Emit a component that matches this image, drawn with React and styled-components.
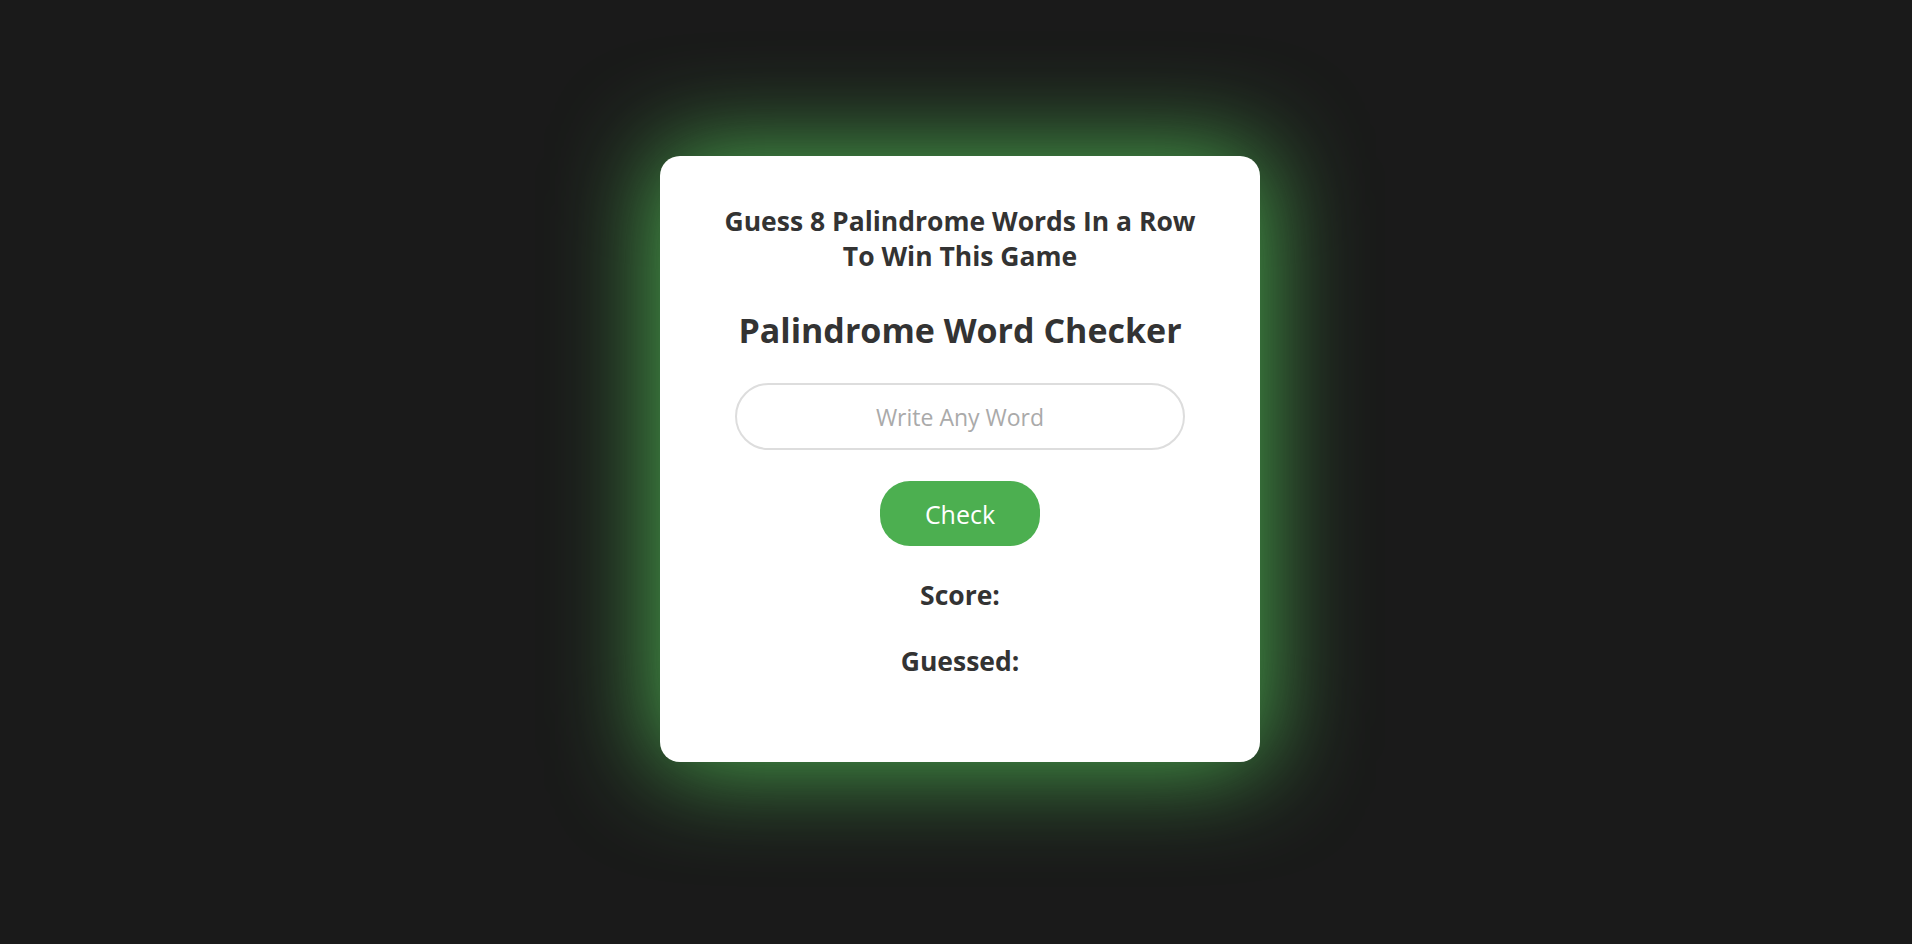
import React, {useState} from "react";
import styled, {createGlobalStyle} from "styled-components";

const GlobalStyle = createGlobalStyle`
    html, body {
        margin: 0;
        padding: 0;
        background: #1a1a1a;
    }
    body {
        font-family: "Open Sans", "Noto Sans", sans-serif;
        color: #333333;
    }
`

const Page = styled.main`
    min-height: 100vh;
    box-sizing: border-box;
    display: flex;
    justify-content: center;
    align-items: flex-start;
    padding: 156px 0 0 8px;
`

const Card = styled.section`
    width: 600px;
    box-sizing: border-box;
    padding: 48px 40px 83px;
    display: flex;
    flex-direction: column;
    align-items: center;
    background: #FFFFFF;
    border-radius: 20px;
    box-shadow: 0 0 100px 5px #4caf50;
    text-align: center;
`

const Title = styled.h3`
    margin: 0 0 36px;
    font-size: 26.5px;
    line-height: 35px;
    font-weight: 700;
    width: 490px;
`

const Heading = styled.h1`
    margin: 0 0 33px;
    font-size: 34px;
    line-height: 40px;
    font-weight: 700;
`

const WordInput = styled.input`
    width: 450px;
    height: 67px;
    box-sizing: border-box;
    padding: 0 20px;
    border: 2px solid #dddddd;
    border-radius: 34px;
    font-family: inherit;
    font-size: 23px;
    color: #333333;
    text-align: center;
    outline: none;
    margin: 0 0 31px;

    &::placeholder {
        color: #aaaaaa;
    }
`

const CheckButton = styled.button`
    width: 160px;
    height: 65px;
    border: none;
    border-radius: 30px;
    background: #4caf50;
    color: #FFFFFF;
    font-family: inherit;
    font-size: 25px;
    cursor: pointer;
    margin: 0 0 32px;
`

const Stat = styled.p`
    margin: ${props => props.last ? "0" : "0 0 31px"};
    font-size: 26.5px;
    line-height: 35px;
    font-weight: 700;
`

export default function App() {
    const [word, setWord] = useState("");

    return <>
        <GlobalStyle />
        <Page>
            <Card>
                <Title>Guess 8 Palindrome Words In a Row To Win This Game</Title>
                <Heading>Palindrome Word Checker</Heading>
                <WordInput
                    type="text"
                    placeholder="Write Any Word"
                    value={word}
                    onChange={(e) => setWord(e.target.value)}
                />
                <CheckButton type="button">Check</CheckButton>
                <Stat>Score:</Stat>
                <Stat last>Guessed:</Stat>
            </Card>
        </Page>
    </>
}
